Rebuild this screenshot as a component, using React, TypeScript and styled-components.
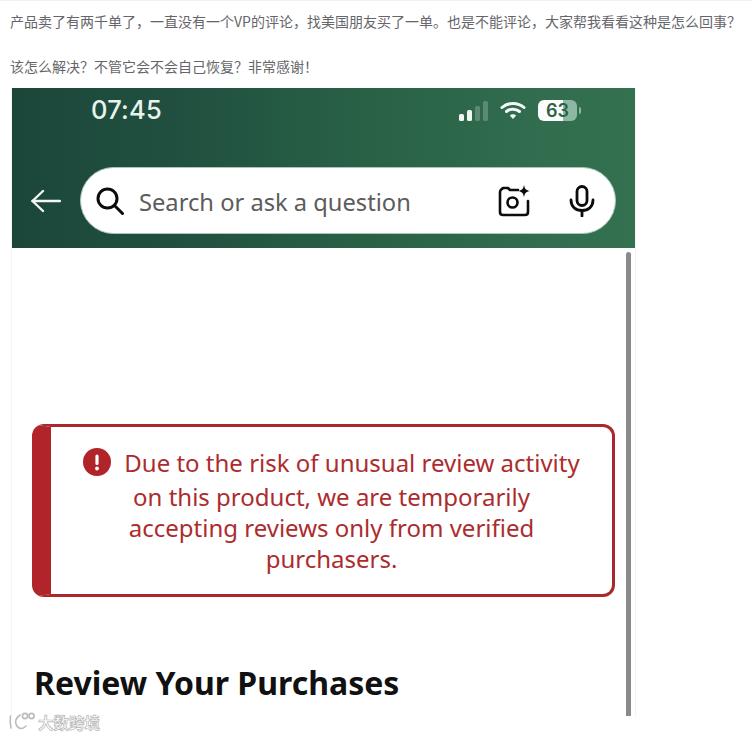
import React from 'react';
import styled, { createGlobalStyle } from 'styled-components';

const GlobalStyle = createGlobalStyle`
  html, body {
    margin: 0;
    padding: 0;
    background: #ffffff;
  }
  * {
    box-sizing: border-box;
  }
`;

const Page = styled.div`
  position: relative;
  width: 752px;
  height: 738px;
  overflow: hidden;
  border-top: 1px solid #f1f1f1;
  font-family: 'Noto Sans', 'Noto Sans CJK SC', sans-serif;
`;

const PostText = styled.p`
  margin: 0;
  padding-left: 10px;
  height: 45px;
  padding-top: 10px;
  font-family: 'Noto Sans CJK SC', sans-serif;
  font-size: 14px;
  line-height: 20px;
  color: #66666a;
  white-space: nowrap;
`;

const Shot = styled.section`
  width: 625px;
  margin: -3px 0 0 11px;
  border-left: 1px solid #f5f5f5;
  border-right: 1px solid #f3f3f3;
`;

const AppHeader = styled.header`
  height: 160px;
  background: linear-gradient(90deg, #1b473a 0%, #204f3f 25%, #286046 55%, #316d4e 85%, #337150 100%);
  display: flex;
  flex-direction: column;
`;

const StatusBar = styled.div`
  height: 79px;
  display: flex;
  align-items: flex-start;
  padding: 7px 0 0 79px;
`;

const Time = styled.span`
  width: 72px;
  font-family: Inter, Roboto, sans-serif;
  font-size: 25.5px;
  font-weight: 500;
  line-height: 30px;
  letter-spacing: 0.2px;
  color: #e9f3ee;
`;

const StatusIcons = styled.div`
  margin-left: 296px;
  display: flex;
  align-items: center;
  gap: 12px;
  height: 30px;
`;

const Signal = styled.div`
  display: flex;
  align-items: flex-end;
  gap: 3px;
  height: 22px;
`;

const SignalBar = styled.span<{ $on: boolean; $height: number }>`
  width: 5px;
  height: ${p => p.$height}px;
  border-radius: 1.5px;
  background: ${p => (p.$on ? '#f1f6f3' : 'rgba(255, 255, 255, 0.22)')};
`;

const Battery = styled.div`
  width: 39px;
  height: 21px;
  border-radius: 6px;
  overflow: hidden;
  background: linear-gradient(90deg, #fbfdfc 0%, #fbfdfc 63%, #8db9a2 63%, #8db9a2 100%);
  text-align: center;
  font-family: Inter, Roboto, sans-serif;
  font-size: 18px;
  font-weight: 600;
  line-height: 21px;
  color: #2c6049;
`;

const BatteryCap = styled.span`
  width: 2px;
  height: 7px;
  margin-left: -10px;
  border-radius: 0 2px 2px 0;
  background: #8db9a2;
`;

const SearchRow = styled.div`
  display: flex;
  align-items: center;
  padding-left: 19px;
  gap: 19px;
`;

const SearchBox = styled.div`
  width: 536px;
  height: 67px;
  border-radius: 34px;
  background: #ffffff;
  border: 1.5px solid #a9c6b6;
  display: flex;
  align-items: center;
  padding-left: 15px;
`;

const SearchText = styled.span`
  margin-left: 15px;
  padding-top: 3px;
  width: 359px;
  font-size: 23.7px;
  color: #5c5c5c;
  white-space: nowrap;
`;

const IconSlot = styled.span<{ $gap: number }>`
  display: flex;
  margin-left: ${p => p.$gap}px;
`;

const Body = styled.div`
  position: relative;
  height: 468px;
  padding: 176px 20px 0 20px;
`;

const Scrollbar = styled.div`
  position: absolute;
  top: 4px;
  bottom: 0;
  right: 4px;
  width: 5px;
  background: #8a8a8a;
  border-radius: 3px 3px 0 0;
`;

const Alert = styled.div`
  width: 583px;
  height: 173px;
  border: 3px solid #a92a2c;
  border-left: 19px solid #b0242a;
  border-radius: 12px;
  padding-top: 18px;
  color: #ac2c2e;
  font-size: 24px;
  text-align: center;
`;

const AlertHead = styled.div`
  display: flex;
  justify-content: center;
  align-items: center;
  gap: 13px;
  height: 34px;
  margin-bottom: 2px;
  white-space: nowrap;
`;

const AlertLine = styled.div`
  line-height: 31px;
  white-space: nowrap;
`;

const Heading = styled.h2`
  margin: 65px 0 0 2px;
  font-size: 32px;
  font-weight: 700;
  line-height: 42px;
  color: #111111;
  white-space: nowrap;
`;

const Watermark = styled.div`
  position: absolute;
  left: 8px;
  top: 711px;
  display: flex;
  align-items: center;
  gap: 3px;
`;

const WatermarkText = styled.span`
  font-family: 'Noto Sans CJK SC', sans-serif;
  font-size: 15.5px;
  font-weight: 700;
  line-height: 20px;
  color: #ffffff;
  -webkit-text-stroke: 0.7px #b5b5b5;
`;

const signalBars = [
  { height: 7, on: true },
  { height: 11, on: true },
  { height: 15, on: false },
  { height: 20, on: false },
];

const postLines = [
  '\u4EA7\u54C1\u5356\u4E86\u6709\u4E24\u5343\u5355\u4E86\uFF0C\u4E00\u76F4\u6CA1\u6709\u4E00\u4E2AVP\u7684\u8BC4\u8BBA\uFF0C\u627E\u7F8E\u56FD\u670B\u53CB\u4E70\u4E86\u4E00\u5355\u3002\u4E5F\u662F\u4E0D\u80FD\u8BC4\u8BBA\uFF0C\u5927\u5BB6\u5E2E\u6211\u770B\u770B\u8FD9\u79CD\u662F\u600E\u4E48\u56DE\u4E8B\uFF1F',
  '\u8BE5\u600E\u4E48\u89E3\u51B3\uFF1F\u4E0D\u7BA1\u5B83\u4F1A\u4E0D\u4F1A\u81EA\u5DF1\u6062\u590D\uFF1F\u975E\u5E38\u611F\u8C22\uFF01',
];

const App: React.FC = () => (
  <Page>
    <GlobalStyle />
    {postLines.map(line => (
      <PostText key={line}>{line}</PostText>
    ))}

    <Shot>
      <AppHeader>
        <StatusBar>
          <Time>07:45</Time>
          <StatusIcons>
            <Signal>
              {signalBars.map(bar => (
                <SignalBar key={bar.height} $on={bar.on} $height={bar.height} />
              ))}
            </Signal>
            <svg width="26" height="20" viewBox="0 0 26 20" fill="none" stroke="#f4f8f6" strokeWidth="3" strokeLinecap="round">
              <path d="M2 7.5C8 2 18 2 24 7.5" />
              <path d="M6.5 11.5C10 8.5 16 8.5 19.5 11.5" />
              <path d="M13 19L9.8 15.4C11.6 14 14.4 14 16.2 15.4Z" fill="#f4f8f6" stroke="none" />
            </svg>
            <Battery>63</Battery>
            <BatteryCap />
          </StatusIcons>
        </StatusBar>

        <SearchRow>
          <svg width="30" height="24" viewBox="0 0 30 24" fill="none" stroke="#f2f7f4" strokeWidth="2.4" strokeLinecap="round" strokeLinejoin="round">
            <path d="M1.5 12H29" />
            <path d="M12 2L1.5 12L12 22" />
          </svg>
          <SearchBox>
            <svg width="28" height="28" viewBox="0 0 28 28" fill="none" stroke="#0c0c0c" strokeWidth="3" strokeLinecap="round">
              <circle cx="11.5" cy="11.5" r="9.5" />
              <path d="M18.5 18.5L26.5 26.5" />
            </svg>
            <SearchText>Search or ask a question</SearchText>
            <IconSlot $gap={0}>
              <svg width="33" height="33" viewBox="0 0 33 33" fill="none" stroke="#0c0c0c" strokeWidth="2.6" strokeLinecap="round" strokeLinejoin="round">
                <path d="M20 6H12L10 4H5C3 6 2 6 2 8V28C2 30 3 31 5 31H27C29 31 30 30 30 28V17" />
                <circle cx="14.5" cy="18.5" r="5" />
                <path d="M26 1C26.8 5 28 6.2 32 7C28 7.8 26.8 9 26 13C25.2 9 24 7.8 20 7C24 6.2 25.2 5 26 1Z" fill="#0c0c0c" stroke="none" />
              </svg>
            </IconSlot>
            <IconSlot $gap={38}>
              <svg width="26" height="32" viewBox="0 0 26 32" fill="none" stroke="#0c0c0c" strokeWidth="2.8" strokeLinecap="round">
                <rect x="8" y="1.5" width="10" height="19" rx="5" />
                <path d="M2 15C2 21.5 6.5 25.5 13 25.5C19.5 25.5 24 21.5 24 15" />
                <path d="M13 25.5V31" />
              </svg>
            </IconSlot>
          </SearchBox>
        </SearchRow>
      </AppHeader>

      <Body>
        <Scrollbar />
        <Alert>
          <AlertHead>
            <svg width="28" height="28" viewBox="0 0 28 28">
              <circle cx="14" cy="14" r="14" fill="#b0242a" />
              <rect x="12.4" y="6.5" width="3.2" height="10.5" rx="1.6" fill="#ffffff" />
              <circle cx="14" cy="20.5" r="1.9" fill="#ffffff" />
            </svg>
            <span>Due to the risk of unusual review activity</span>
          </AlertHead>
          <AlertLine>on this product, we are temporarily</AlertLine>
          <AlertLine>accepting reviews only from verified</AlertLine>
          <AlertLine>purchasers.</AlertLine>
        </Alert>
        <Heading>Review Your Purchases</Heading>
      </Body>
    </Shot>

    <Watermark>
      <svg width="27" height="20" viewBox="0 0 27 20" fill="none" stroke="#bcbcbc" strokeWidth="1.6" strokeLinecap="round">
        <path d="M2.5 4C2 8 2 12 3 16" />
        <path d="M12 3C8 6 7 9 8 12C9.5 17 14 18 18 14" />
        <circle cx="17" cy="4" r="2.6" />
        <circle cx="23.5" cy="4" r="2.6" />
      </svg>
      <WatermarkText>{'\u5927\u6570\u8DE8\u5883'}</WatermarkText>
    </Watermark>
  </Page>
);

export default App;
